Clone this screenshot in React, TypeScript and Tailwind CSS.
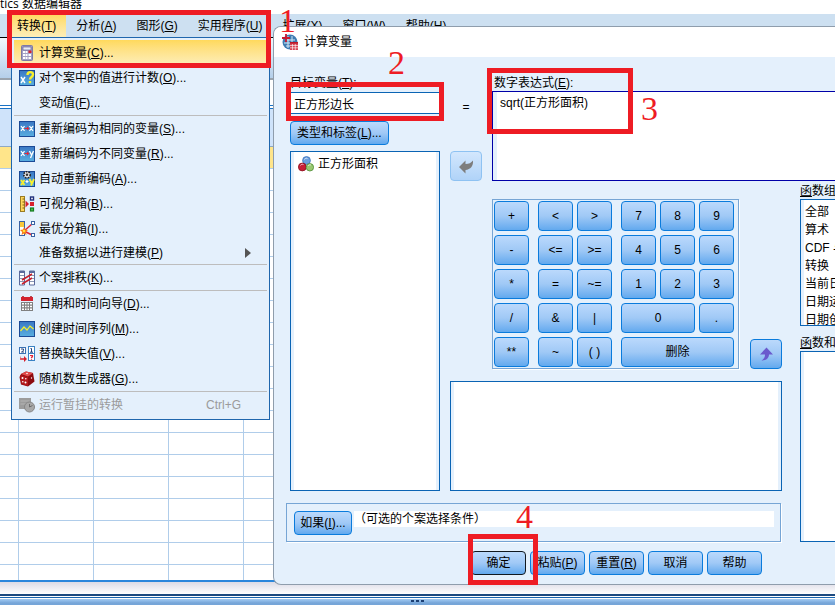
import React from 'react';
import clsx from 'clsx';

interface MenuEntry {
  text: string;
  hotkey?: string;
  dots?: boolean;
  icon?: React.ReactNode;
  active?: boolean;
  disabled?: boolean;
  submenu?: boolean;
  shortcut?: string;
}

const Svg: React.FC<{ children: React.ReactNode }> = ({ children }) => (
  <svg className="w-4 h-4 shrink-0" viewBox="0 0 16 16" aria-hidden="true">{children}</svg>
);

const BlueTile = () => (
  <>
    <defs>
      <linearGradient id="tile" x1="0" y1="0" x2="0" y2="1">
        <stop offset="0" stopColor="#3a78c4" />
        <stop offset="1" stopColor="#58aee0" />
      </linearGradient>
    </defs>
    <rect x="0.5" y="0.5" width="15" height="15" fill="url(#tile)" stroke="#1b4a96" />
  </>
);

const CalculatorIcon = () => (
  <Svg>
    <rect x="2.5" y="0.5" width="11" height="15" rx="1" fill="#a3a0c4" stroke="#7d7aa6" />
    <rect x="4" y="2" width="8" height="3" fill="#e8ecf4" stroke="#55558c" strokeWidth="0.6" />
    <path d="M4 6h2v2H4zM6.5 6h2v2h-2zM4 9h2v2H4zM6.5 9h2v2h-2zM9.5 9H12v2H9.5zM4 12h2v2H4zM6.5 12h2v2h-2zM9.5 12H12v2H9.5z" fill="#fff" />
    <path d="M9.5 5.500H12.500v2.500H9.500z" fill="#d8202c" />
  </Svg>
);

const CountIcon = () => (
  <Svg>
    <BlueTile />
    <path d="M2 7l4 6M6 7l-4 6" stroke="#fff" strokeWidth="1.4" />
    <path d="M8.500 5c0-4 5.500-3.500 5.500-.5 0 2.500-3 2.500-3 5" fill="none" stroke="#f8f02c" strokeWidth="2.4" />
    <rect x="9.8" y="11" width="2.4" height="2.2" fill="#f8f02c" />
  </Svg>
);

const RecodeSameIcon = () => (
  <Svg>
    <BlueTile />
    <path d="M2 5l3.5 5M5.5 5L2 10M10.5 5l3.5 5M14 5l-3.5 5" stroke="#fff" strokeWidth="1.3" />
    <path d="M5.5 7H8V5.5l2.500 2L8 9.5V8H5.500z" fill="#e0283c" />
  </Svg>
);

const RecodeDiffIcon = () => (
  <Svg>
    <BlueTile />
    <path d="M2 5l3.5 5M5.5 5L2 10M10.5 5l2 4M14.5 5l-3 7" stroke="#fff" strokeWidth="1.3" />
    <path d="M5.5 7H8V5.5l2.500 2L8 9.5V8H5.500z" fill="#e0283c" />
  </Svg>
);

const AutoRecodeIcon = () => (
  <Svg>
    <BlueTile />
    <path d="M2 9l3.5 5M5.500 9L2 14M10.500 8l2 4M15 8l-3 6.500" stroke="#f8f02c" strokeWidth="1.8" />
    <path d="M6.500 10.500h3M8 9v3" stroke="#fff" strokeWidth="1.2" />
    <circle cx="8" cy="3.800" r="3.200" fill="#e4e4e4" stroke="#222" strokeWidth="1.6" strokeDasharray="1.6 1.1" />
    <circle cx="8" cy="3.800" r="1.200" fill="#333" />
  </Svg>
);

const VisualBinIcon = () => (
  <Svg>
    <rect x="1.5" y="0.5" width="4" height="15" fill="#ffd75a" stroke="#9a7c24" />
    <path d="M3.5 3h2M3.5 6h2M3.5 9h2M3.5 12h2" stroke="#7a5c14" />
    <path d="M6.500 4.500L10 8l-3.500 3.500z" fill="#d8202c" />
    <rect x="11.5" y="1" width="3" height="3" fill="#fff" stroke="#20307c" strokeWidth="1.4" />
    <rect x="11" y="6" width="4" height="4" fill="#d8202c" />
    <rect x="11.5" y="12" width="3" height="3" fill="#4cc04c" stroke="#147c20" strokeWidth="1.2" />
  </Svg>
);

const OptimalBinIcon = () => (
  <Svg>
    <rect x="0.5" y="0.5" width="5" height="14" fill="#fff" stroke="#3a62a4" />
    <rect x="1" y="1" width="4" height="5" fill="#f8c83c" />
    <path d="M5 10l8-7M5 10l8 4" stroke="#e0283c" strokeWidth="1.6" />
    <path d="M5 6l1 2.500 3 .5-2.200 2 .7 3L5 12.500 2.500 14l.7-3L1 9l3-.5z" fill="#f87c14" />
    <circle cx="5" cy="10" r="1.3" fill="#ffe03c" />
    <rect x="12.5" y="0.5" width="3" height="3" fill="#fff" stroke="#3a62a4" />
    <rect x="12.5" y="12.5" width="3" height="3" fill="#fff" stroke="#3a62a4" />
  </Svg>
);

const RankIcon = () => (
  <Svg>
    <path d="M0.5 1h5v14h-5zM10.5 1h5v14h-5z" fill="#fff" stroke="#5a6a9c" />
    <path d="M1 2h4M11 2h4" stroke="#5a6a9c" strokeWidth="2" />
    <path d="M1 5.5h4M1 8.5h4M1 11.5h4M11 5.5h4M11 8.5h4M11 11.5h4" stroke="#8c98b4" />
    <path d="M3 10l10-6M3 14l10-6" stroke="#c8202c" strokeWidth="1.5" />
  </Svg>
);

const CalendarIcon = () => (
  <Svg>
    <path d="M4 0v3M12 0v3" stroke="#a01820" strokeWidth="1.5" />
    <rect x="2" y="1" width="12" height="4" fill="#d42430" />
    <rect x="2" y="6" width="12" height="9" fill="#808080" />
    <path d="M3 7h2v1.5H3zM6 7h1.5v1.5H6zM8.5 7H10v1.5H8.5zM11 7h2v1.5h-2zM3 9.7h2v1.5H3zM6 9.7h1.5v1.5H6zM8.5 9.7H10v1.5H8.5zM11 9.7h2v1.5h-2zM3 12.4h2v1.5H3zM6 12.4h1.5v1.5H6zM8.5 12.4H10v1.5H8.5zM11 12.4h2v1.5h-2z" fill="#fff" />
  </Svg>
);

const SeriesIcon = () => (
  <Svg>
    <BlueTile />
    <path d="M1.5 10L5 6l3 3 3-4 3.5 3" fill="none" stroke="#f8f02c" strokeWidth="1.2" />
  </Svg>
);

const ReplaceIcon = () => (
  <Svg>
    <rect x="0.5" y="1.5" width="6" height="6" fill="#fff" stroke="#3a72b4" />
    <path d="M2 3h2.5v1.500L2.500 6H5" fill="none" stroke="#20407c" />
    <rect x="9.5" y="0.5" width="6" height="14" fill="#fff" stroke="#3a82c4" />
    <path d="M11.5 2.500h1V6M11 6.200h3" fill="none" stroke="#20407c" />
    <path d="M9.5 7.500h6" stroke="#3a82c4" />
    <path d="M11 9.500h2.500V11h-1v1M12.500 12.800v1" fill="none" stroke="#e0283c" strokeWidth="1.2" />
    <path d="M2 9.500v2.700h3V10l3 3-3 3v-2.300H1" fill="#d8202c" />
  </Svg>
);

const DiceIcon = () => (
  <Svg>
    <path d="M2 3l5-2.500L14 2l1.500 8.500L9 15.500l-7-2L0.500 6z" fill="#8c0c10" />
    <path d="M2 3l5-2.500L14 2 9 5.500z" fill="#e04848" />
    <path d="M1 4l8 2v9l-6.500-2z" fill="#b4181c" />
    <g fill="#fff">
      <circle cx="8" cy="2.500" r="0.800" />
      <circle cx="3.500" cy="7" r="1" />
      <circle cx="6.500" cy="11.500" r="1" />
      <circle cx="6.800" cy="7.800" r="0.800" />
      <circle cx="3.800" cy="10.800" r="0.800" />
      <circle cx="12.500" cy="7" r="0.700" />
    </g>
  </Svg>
);

const PendingIcon = () => (
  <Svg>
    <rect x="0" y="1" width="12" height="11" fill="#9c9c9c" />
    <path d="M1.5 4h9M1.5 7h9" stroke="#b4b4b4" />
    <circle cx="10.5" cy="10" r="5" fill="#a8a8a8" stroke="#868686" />
    <path d="M10.5 7v3l3-1.500" fill="none" stroke="#6c6c6c" />
  </Svg>
);

const DialogIcon = () => (
  <Svg>
    <circle cx="8" cy="8" r="7.5" fill="#3f7cb2" />
    <path d="M3 6h10M2 9h12M4 12h8M6 2v12M10 2v12" stroke="#d4e6f4" />
    <path d="M4 0v8M0 4h8" stroke="#c81830" strokeWidth="1.8" />
    <rect x="8" y="8" width="8" height="8" fill="#d84454" />
    <path d="M8 11.500h8M8 13.800h8M10.500 10v6M13.300 10v6" stroke="#fff" strokeWidth="0.6" />
    <path d="M8 8.800h8" stroke="#b81828" strokeWidth="1.6" />
  </Svg>
);

const NominalIcon = () => (
  <Svg>
    <circle cx="8.5" cy="4.5" r="3.9" fill="#6ca0e0" stroke="#3a70b8" strokeWidth="0.8" />
    <circle cx="4.3" cy="11" r="3.9" fill="#c82038" stroke="#8c1020" strokeWidth="0.8" />
    <circle cx="11.9" cy="11.3" r="3.7" fill="#98c870" stroke="#4c8c34" strokeWidth="0.8" />
    <path d="M6.500 3.500a2 1.500 0 0 1 3-1M2.500 9.500a2 1.500 0 0 1 3-1M10 10a2 1.500 0 0 1 3-1" fill="none" stroke="#fff" strokeOpacity="0.7" />
  </Svg>
);

const MENU_BAR = [
  ['转换', 'T'],
  ['分析', 'A'],
  ['图形', 'G'],
  ['实用程序', 'U'],
  ['扩展', 'X'],
  ['窗口', 'W'],
  ['帮助', 'H'],
];

const MENU_GROUPS: MenuEntry[][] = [
  [
    { text: '计算变量', hotkey: 'C', dots: true, icon: <CalculatorIcon />, active: true },
    { text: '对个案中的值进行计数', hotkey: 'O', dots: true, icon: <CountIcon /> },
    { text: '变动值', hotkey: 'F', dots: true },
  ],
  [
    { text: '重新编码为相同的变量', hotkey: 'S', dots: true, icon: <RecodeSameIcon /> },
    { text: '重新编码为不同变量', hotkey: 'R', dots: true, icon: <RecodeDiffIcon /> },
    { text: '自动重新编码', hotkey: 'A', dots: true, icon: <AutoRecodeIcon /> },
    { text: '可视分箱', hotkey: 'B', dots: true, icon: <VisualBinIcon /> },
    { text: '最优分箱', hotkey: 'I', dots: true, icon: <OptimalBinIcon /> },
    { text: '准备数据以进行建模', hotkey: 'P', submenu: true },
  ],
  [{ text: '个案排秩', hotkey: 'K', dots: true, icon: <RankIcon /> }],
  [
    { text: '日期和时间向导', hotkey: 'D', dots: true, icon: <CalendarIcon /> },
    { text: '创建时间序列', hotkey: 'M', dots: true, icon: <SeriesIcon /> },
    { text: '替换缺失值', hotkey: 'V', dots: true, icon: <ReplaceIcon /> },
    { text: '随机数生成器', hotkey: 'G', dots: true, icon: <DiceIcon /> },
  ],
  [{ text: '运行暂挂的转换', icon: <PendingIcon />, disabled: true, shortcut: 'Ctrl+G' }],
];

const FUNCTION_GROUPS = ['全部', '算术', 'CDF 与非中心 CDF', '转换', '当前日期/时间', '日期运算', '日期创建'];

const Mnemonic: React.FC<{ text: string; hotkey?: string; tail?: string }> = ({ text, hotkey, tail }) => (
  <span className="whitespace-nowrap">
    {text}
    {hotkey && <>(<u>{hotkey}</u>)</>}
    {tail}
  </span>
);

const SpssButton: React.FC<React.ButtonHTMLAttributes<HTMLButtonElement>> = ({ className, children, disabled, ...rest }) => (
  <button
    type="button"
    disabled={disabled}
    className={clsx(
      'flex items-center justify-center rounded-[4px] border bg-linear-to-b whitespace-nowrap',
      disabled ? 'from-[#d3e7fd] to-[#b0d3f8]' : 'from-[#bbd9fc] via-[#a0c9f6] to-[#62a9ee]',
      className,
    )}
    {...rest}
  >
    {children}
  </button>
);

const Key: React.FC<{ label: string; wide?: string }> = ({ label, wide }) => (
  <SpssButton className={clsx('h-[30px] border-[#0a7bdc]', wide)}>{label}</SpssButton>
);

const DataSheet = () => (
  <table className="table-fixed w-full border-separate border-spacing-0">
    <colgroup>
      <col className="w-[19px]" />
      {Array.from({ length: 11 }, (_, i) => <col key={i} className="w-[75px]" />)}
    </colgroup>
    <tbody>
      <tr className="h-[38px] bg-[#cfe3fa]">
        {Array.from({ length: 12 }, (_, c) => <td key={c} className="border-b border-[#8fa9c4]" />)}
      </tr>
      {Array.from({ length: 20 }, (_, r) => (
        <tr key={r} className={clsx('h-[22px]', r === 0 && 'bg-[#ffe58a]')}>
          {Array.from({ length: 12 }, (_, c) => <td key={c} className="border-r border-b border-[#b0cdea]" />)}
        </tr>
      ))}
    </tbody>
  </table>
);

const TransformMenu = () => (
  <div role="menu" className="absolute top-[37px] left-[11px] w-[259px] border border-[#1f66ad] bg-[#e4f0fc] p-[2px]">
    {MENU_GROUPS.map((group, g) => (
      <div key={g} className={clsx(g > 0 && 'border-t border-[#bdbdbd]')}>
        {group.map(item => (
          <button
            key={item.text}
            type="button"
            role="menuitem"
            disabled={item.disabled}
            className={clsx(
              'flex w-full items-center gap-1 pl-[5px] pr-4 text-left',
              item.submenu ? 'h-[23px]' : 'h-[25px]',
              item.active && 'bg-linear-to-b from-[#ffd95c] to-[#fdeeb8]',
              item.disabled && 'text-[#9b9b9b]',
            )}
          >
            <span className="flex w-4 shrink-0">{item.icon}</span>
            <span className="flex-1">
              <Mnemonic text={item.text} hotkey={item.hotkey} tail={item.dots ? '...' : undefined} />
            </span>
            {item.submenu && (
              <svg className="w-[6px] h-[10px]" viewBox="0 0 6 10" aria-hidden="true">
                <path d="M0 0l6 5-6 5z" fill="#555" />
              </svg>
            )}
            {item.shortcut && <span className="pr-[10px]">{item.shortcut}</span>}
          </button>
        ))}
      </div>
    ))}
  </div>
);

const Keypad = () => (
  <div className="flex gap-[9px] border border-[#76a5d5] py-px pl-px pr-1 shadow-[1px_1px_0_#fff]">
    <div className="grid grid-cols-[35px] gap-1">
      {['+', '-', '*', '/', '**'].map(k => <Key key={k} label={k} />)}
    </div>
    <div className="grid grid-cols-[35px_35px] gap-1">
      {['<', '>', '<=', '>=', '=', '~=', '&', '|', '~', '( )'].map(k => <Key key={k} label={k} />)}
    </div>
    <div className="grid grid-cols-[35px_35px_35px] gap-1">
      {['7', '8', '9', '4', '5', '6', '1', '2', '3'].map(k => <Key key={k} label={k} />)}
      <Key label="0" wide="col-span-2" />
      <Key label="." />
      <Key label="删除" wide="col-span-3" />
    </div>
  </div>
);

const ComputeDialog = () => (
  <div
    role="dialog"
    aria-label="计算变量"
    className="absolute top-[26px] left-[273px] right-0 overflow-hidden rounded-l-lg border border-r-0 border-[#8f9dac] bg-[#e4f0fc]"
  >
    <div className="flex h-[30px] items-center gap-[6px] bg-white pl-2">
      <DialogIcon />
      <h1>计算变量</h1>
    </div>

    <div className="grid grid-cols-[150px_32px_290px_minmax(0,1fr)] grid-rows-[106px_306px_auto] gap-x-[10px] gap-y-1 pt-[18px] pl-4">
      <div className="row-span-2 flex flex-col items-start">
        <label htmlFor="target" className="h-[17px] leading-4"><Mnemonic text="目标变量" hotkey="T" tail=":" /></label>
        <input id="target" defaultValue="正方形边长" className="h-[22px] w-full border border-[#0a64b4] bg-white px-[3px]" />
        <SpssButton className="mt-[7px] h-6 px-[6px] border-[#0a7bdc]">
          <Mnemonic text="类型和标签" hotkey="L" tail="..." />
        </SpssButton>
        <ul className="mt-[6px] w-full flex-1 border border-[#0a64b4] bg-white pt-1 pl-[7px] shadow-[inset_3px_0_#e4f0fc,inset_-3px_0_#e4f0fc]">
          <li className="flex items-center gap-1"><NominalIcon />正方形面积</li>
        </ul>
      </div>

      <div className="flex flex-col justify-between pt-6 text-center">
        <span>=</span>
        <SpssButton disabled aria-label="移入" className="h-[30px] border-[#8ec2f2]">
          <svg className="w-4 h-4" viewBox="0 0 16 16" aria-hidden="true">
            <path d="M1 9l6.500-6.500V6c3.500 0 5.500-1 7.500-3.500.5 5.500-2.500 9-7.500 9.500v3.500z" fill="#7d7d7d" />
          </svg>
        </SpssButton>
      </div>

      <div className="col-span-2 flex flex-col">
        <label htmlFor="expression" className="h-4 pl-[2px] leading-4"><Mnemonic text="数字表达式" hotkey="E" tail=":" /></label>
        <textarea
          id="expression"
          defaultValue="sqrt(正方形面积)"
          className="flex-1 resize-none border border-r-0 border-[#0000a8] bg-white px-[7px] py-[3px] leading-4 shadow-[inset_4px_0_#e4f0fc]"
        />
      </div>

      <div className="col-span-2 flex flex-col gap-3 pt-[14px]">
        <div className="flex items-end justify-between pl-[42px]">
          <Keypad />
          <SpssButton aria-label="移入函数" className="h-[30px] w-8 border-[#0a7bdc]">
            <svg className="w-4 h-4" viewBox="0 0 16 16" aria-hidden="true">
              <path d="M8.5 1.500L15 8.500h-4c0 3.500-2.500 6-7.500 6 2.500-1.500 3.500-3.500 3.500-6H2z" fill="#6a5acd" />
            </svg>
          </SpssButton>
        </div>
        <div className="flex-1 border border-[#0a64b4] bg-white shadow-[inset_3px_0_#e4f0fc,inset_-3px_0_#e4f0fc]" />
      </div>

      <div className="row-span-2 flex flex-col pl-2 whitespace-nowrap">
        <h2 className="h-[14px] leading-3"><u>函</u>数组:</h2>
        <ul className="h-[127px] overflow-hidden border border-r-0 border-[#0a64b4] bg-white pt-[3px] pl-1 shadow-[inset_3px_0_#e4f0fc]">
          {FUNCTION_GROUPS.map(name => <li key={name} className="h-[18px] leading-[18px]">{name}</li>)}
        </ul>
        <h2 className="mt-[9px] h-4 leading-4"><u>函</u>数和特殊变量:</h2>
        <div className="flex-1 border border-r-0 border-[#0a64b4] bg-white shadow-[inset_3px_0_#e4f0fc]" />
      </div>

      <div className="col-span-3 -ml-1 mr-px mt-2 flex h-[39px] items-start gap-[2px] border border-[#76a5d5] py-[7px] pl-[7px] pr-[6px] shadow-[1px_1px_0_#fff]">
        <SpssButton className="h-6 w-[58px] border-[#0a7bdc]"><Mnemonic text="如果" hotkey="I" tail="..." /></SpssButton>
        <input readOnly aria-label="个案选择条件" value="（可选的个案选择条件）" className="h-4 min-w-0 flex-1 bg-white" />
      </div>
    </div>

    <div className="flex gap-1 pt-[9px] pb-[9px] pl-[197px]">
      <SpssButton className="h-6 w-[55px] border-[#101820]">确定</SpssButton>
      <SpssButton className="h-6 w-[55px] border-[#0a7bdc]"><Mnemonic text="粘贴" hotkey="P" /></SpssButton>
      <SpssButton className="h-6 w-[55px] border-[#0a7bdc]"><Mnemonic text="重置" hotkey="R" /></SpssButton>
      <SpssButton className="h-6 w-[55px] border-[#0a7bdc]">取消</SpssButton>
      <SpssButton className="h-6 w-[55px] border-[#0a7bdc]">帮助</SpssButton>
    </div>
  </div>
);

// Red tutorial frames and step numbers drawn over the windows
const Annotations = () => (
  <div className="pointer-events-none absolute inset-0 font-['Liberation_Serif','Noto_Sans_CJK_SC',serif] text-[34px] leading-[34px] text-[#ee1c24]">
    <div className="absolute left-[7px] top-[10px] h-[58px] w-[264px] border-5 border-[#ee1c24]" />
    <div className="absolute left-[286px] top-[82px] h-[39px] w-[158px] border-5 border-[#ee1c24]" />
    <div className="absolute left-[487px] top-[68px] h-[66px] w-[146px] border-5 border-[#ee1c24]" />
    <div className="absolute left-[468px] top-[534px] h-[51px] w-[70px] border-5 border-[#ee1c24]" />
    <span className="absolute left-[279px] top-[4px]">1</span>
    <span className="absolute left-[388px] top-[46px]">2</span>
    <span className="absolute left-[641px] top-[92px]">3</span>
    <span className="absolute left-[516px] top-[500px]">4</span>
  </div>
);

export default function App() {
  return (
    <div className="relative flex h-screen flex-col overflow-hidden bg-white font-['Liberation_Sans','Noto_Sans_CJK_SC',sans-serif] text-[12px] leading-4 text-black">
      <div className="flex h-[14px] shrink-0 items-end overflow-hidden pb-[2px]">
        <span className="font-['Open_Sans','Noto_Sans_CJK_SC',sans-serif]">tics 数据编辑器</span>
      </div>
      <nav className="flex h-6 shrink-0 border-b border-black bg-[#cde0f1] pl-[7px]">
        {MENU_BAR.map(([text, key], i) => (
          <button
            key={key}
            type="button"
            className={clsx('flex items-center px-[10px]', i === 0 && 'bg-linear-to-b from-[#ffd95c] to-[#fdeeb8]')}
          >
            <Mnemonic text={text} hotkey={key} />
          </button>
        ))}
      </nav>
      <div className="h-[42px] shrink-0 border-b-2 border-[#9aa4ae] bg-linear-to-b from-[#f2f7fc] to-[#b4cfea]" />
      <div className="h-[29px] shrink-0 border-b-4 border-double border-[#1a72c4] bg-white" />
      <div className="min-h-0 flex-1 overflow-hidden border-b-2 border-[#2a86dc]">
        <DataSheet />
      </div>
      <div className="h-3 shrink-0 bg-linear-to-b from-[#dcdbe6] to-white" />
      <div className="flex h-[11px] shrink-0 flex-col border-t-2 border-[#1c4a80] bg-[#76a5d8]">
        <div className="h-[2px] shrink-0 border-b border-[#1a66b0] bg-white" />
        <div className="flex h-[5px] items-center justify-center gap-[2px] border-t border-white bg-linear-to-b from-[#a4ccf4] to-[#76a5d8]">
          {[0, 1, 2].map(n => <i key={n} className="h-[2px] w-[3px] bg-[#1c3f74]" />)}
        </div>
      </div>

      <ComputeDialog />
      <TransformMenu />
      <Annotations />
    </div>
  );
}
